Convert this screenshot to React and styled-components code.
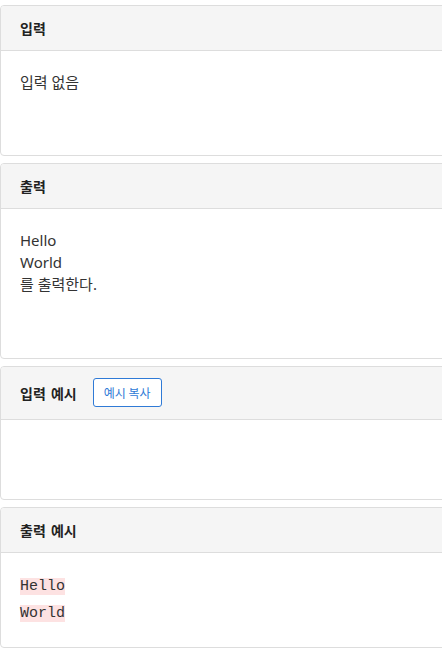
import React from "react";
import styled, { createGlobalStyle } from "styled-components";

const Global = createGlobalStyle`
  html, body { margin: 0; padding: 0; overflow: hidden; background: #fff; }
  body { font-family: "Noto Sans", "Noto Sans CJK KR", sans-serif; color: #333; }
`;

const Page = styled.div`
  display: flex;
  flex-direction: column;
  gap: 7px;
  padding-top: 5px;
  width: 470px;
`;

const Card = styled.section`
  border: 1px solid #dddddd;
  border-radius: 4px;
  background: #fff;
  overflow: hidden;
`;

const Header = styled.div`
  display: flex;
  align-items: center;
  gap: 16px;
  background: #f5f5f5;
  border-bottom: 1px solid #dddddd;
  padding: ${(p) => (p.$tall ? "11px 19px 12px" : "12px 19px")};
`;

const Title = styled.h3`
  margin: 0;
  font-family: "Noto Sans CJK KR", "Noto Sans", sans-serif;
  font-size: 14px;
  font-weight: 700;
  line-height: 20px;
  color: #222;
  word-spacing: 2px;
`;

const CopyButton = styled.button`
  height: 29px;
  padding: 0 10px;
  border: 1px solid #2f7ad6;
  border-radius: 3px;
  background: #fff;
  color: #2f7ad6;
  font-family: "Noto Sans CJK KR", sans-serif;
  font-size: 12px;
  line-height: 1;
`;

const Body = styled.div`
  padding: 20px 19px;
`;

const Text = styled.p`
  margin: 0 0 ${(p) => p.$gap || 43}px;
  font-size: 15px;
  line-height: 22px;
  color: #333;
`;

const Sample = styled.pre`
  margin: 0;
  min-height: 39px;
  font-family: "Liberation Mono", "DejaVu Sans Mono", monospace;
  font-size: 15px;
  line-height: 27px;
  color: #333;
  white-space: pre;
`;

const Mark = styled.span`
  background: #fde2e2;
`;

export default function App() {
  return (
    <>
      <Global />
      <Page>
        <Card>
          <Header>
            <Title>입력</Title>
          </Header>
          <Body>
            <Text $gap={42}>입력 없음</Text>
          </Body>
        </Card>
        <Card>
          <Header>
            <Title>출력</Title>
          </Header>
          <Body>
            <Text>
              Hello
              <br />
              World
              <br />를 출력한다.
            </Text>
          </Body>
        </Card>
        <Card>
          <Header $tall>
            <Title>입력 예시</Title>
            <CopyButton>예시 복사</CopyButton>
          </Header>
          <Body>
            <Sample />
          </Body>
        </Card>
        <Card>
          <Header>
            <Title>출력 예시</Title>
          </Header>
          <Body>
            <Sample>
              <Mark>Hello</Mark>
              {"\n"}
              <Mark>World</Mark>
            </Sample>
          </Body>
        </Card>
      </Page>
    </>
  );
}
